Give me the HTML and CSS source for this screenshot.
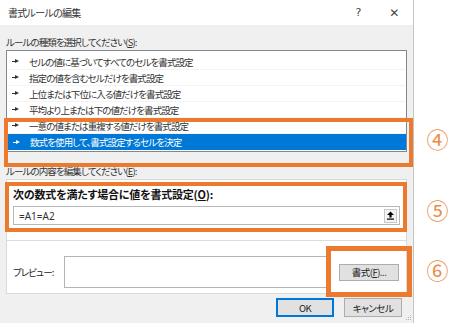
FILE: index.html
```html
<!DOCTYPE html>
<html lang="ja">
<head>
<meta charset="utf-8">
<title>書式ルールの編集</title>
<link rel="stylesheet" href="styles.css">
</head>
<body>
<div class="page">
    <div class="dialog">
        <div class="titlebar">
            <span class="title">書式ルールの編集</span>
            <span class="help">?</span>
            <span class="close">✕</span>
        </div>

        <div class="body">
            <div class="label label_first">ルールの種類を選択してください(<u>S</u>):</div>
            <div class="rule_list">
                <div class="rule_item"><span class="arrow"></span>セルの値に基づいてすべてのセルを書式設定</div>
                <div class="rule_item"><span class="arrow"></span>指定の値を含むセルだけを書式設定</div>
                <div class="rule_item"><span class="arrow"></span>上位または下位に入る値だけを書式設定</div>
                <div class="rule_item"><span class="arrow"></span>平均より上または下の値だけを書式設定</div>
                <div class="rule_item"><span class="arrow"></span>一意の値または重複する値だけを書式設定</div>
                <div class="rule_item selected"><span class="arrow"></span>数式を使用して、書式設定するセルを決定</div>
            </div>

            <div class="label label_second">ルールの内容を編集してください(<u>E</u>):</div>
            <div class="rule_panel">
                <div class="formula_part">
                    <div class="bold_label">次の数式を満たす場合に値を書式設定(<u>O</u>):</div>
                    <div class="formula_input">
                        <span class="formula_text">=A1=A2</span>
                        <span class="collapse_btn">
                            <svg width="9" height="9" viewBox="0 0 9 9">
                                <path d="M4.5 0.5 L8 4 L5.6 4 L5.6 6.5 L3.4 6.5 L3.4 4 L1 4 Z" fill="#000"/>
                                <rect x="1" y="7.5" width="7" height="1.2" fill="#000"/>
                            </svg>
                        </span>
                    </div>
                </div>
                <div class="preview_part">
                    <span class="preview_label">プレビュー:</span>
                    <div class="preview_box"></div>
                    <button class="btn format_btn">書式(<u>F</u>)...</button>
                </div>
            </div>

            <div class="footer">
                <button class="btn ok_btn">OK</button>
                <button class="btn">キャンセル</button>
                <span class="grip">
                    <svg width="6" height="6" viewBox="0 0 6 6">
                        <rect x="4" y="0" width="1" height="1" fill="#b5b5b5"/>
                        <rect x="2" y="2" width="1" height="1" fill="#b5b5b5"/>
                        <rect x="4" y="2" width="1" height="1" fill="#b5b5b5"/>
                        <rect x="0" y="4" width="1" height="1" fill="#b5b5b5"/>
                        <rect x="2" y="4" width="1" height="1" fill="#b5b5b5"/>
                        <rect x="4" y="4" width="1" height="1" fill="#b5b5b5"/>
                    </svg>
                </span>
            </div>
        </div>
    </div>

    <div class="notes">
        <span class="note note_4">④</span>
        <span class="note note_5">⑤</span>
        <span class="note note_6">⑥</span>
    </div>

    <div class="mark mark_4"></div>
    <div class="mark mark_5"></div>
    <div class="mark mark_6"></div>
</div>
</body>
</html>
```

FILE: styles.css
```css
html, body {
    margin: 0;
    padding: 0;
    background-color: white;
}

.page {
    position: relative;
    display: flex;
    width: 461px;
    height: 323px;
    overflow: hidden;
    font-family: "Noto Sans CJK JP", "Noto Sans", sans-serif;
    font-feature-settings: "palt";
    font-size: 9.5px;
    letter-spacing: -0.9px;
    color: #222;
}

.dialog {
    width: 413px;
    height: 323px;
    flex-shrink: 0;
    background-color: #f0f0f0;
    border-right: 1px solid #c4c4c4;
    display: flex;
    flex-direction: column;
}

.titlebar {
    height: 25px;
    background-color: white;
    display: flex;
    align-items: center;
    padding-left: 8px;
    color: #333;
    font-size: 10px;
    letter-spacing: -0.7px;
}

.title {
    flex: 1;
}

.help {
    width: 12px;
    margin-right: 23px;
    text-align: center;
    font-family: "DejaVu Sans", sans-serif;
    font-size: 11px;
    color: #444;
}

.close {
    width: 14px;
    margin-right: 12px;
    text-align: center;
    font-family: "DejaVu Sans", sans-serif;
    font-size: 12px;
    color: #444;
}

.body {
    padding: 0 6px;
}

.label {
    height: 14px;
    line-height: 14px;
    color: #333;
}

.label_first {
    margin-top: 10px;
    margin-bottom: 1px;
}

.rule_list {
    width: 399px;
    background-color: white;
    border: 1px solid #828790;
    padding: 3px 0 1px 0;
}

.rule_item {
    height: 16px;
    line-height: 16px;
    display: flex;
    align-items: center;
    border-bottom: 1px solid #f3f3f3;
    box-sizing: border-box;
    color: #333;
}

.rule_item.selected {
    background-color: #0078d7;
    color: white;
    margin-left: 1px;
    border-bottom: none;
}

.arrow {
    position: relative;
    width: 7px;
    height: 5px;
    margin: 0 10px 0 5px;
}

.arrow::before {
    content: "";
    position: absolute;
    left: 0;
    top: 2px;
    width: 3px;
    height: 1px;
    background-color: currentColor;
}

.arrow::after {
    content: "";
    position: absolute;
    left: 3px;
    top: 0;
    border-left: 4px solid currentColor;
    border-top: 2.5px solid transparent;
    border-bottom: 2.5px solid transparent;
}

.label_second {
    margin-top: 12px;
    margin-bottom: 1px;
}

.rule_panel {
    width: 399px;
    background-color: white;
    border: 1px solid #d9d9d9;
}

.formula_part {
    padding: 6px 6px 15px 6px;
    border-bottom: 1px solid #dcdcdc;
}

.bold_label {
    font-weight: bold;
    font-size: 11px;
    letter-spacing: -0.2px;
    height: 16px;
    line-height: 16px;
    color: #111;
    margin-bottom: 4px;
}

.formula_input {
    height: 17px;
    border: 1px solid #b8b8b8;
    display: flex;
    align-items: center;
    justify-content: space-between;
    padding: 0 2px 0 5px;
}

.formula_text {
    font-family: "Noto Sans", sans-serif;
    font-size: 10px;
    letter-spacing: 0;
    color: #333;
}

.collapse_btn {
    width: 11px;
    height: 12px;
    border: 1px solid #c8c8c8;
    background-color: #f4f4f4;
    display: flex;
    align-items: center;
    justify-content: center;
}

.preview_part {
    height: 42px;
    display: flex;
    align-items: center;
    padding: 10px 0 0 6px;
}

.preview_label {
    width: 51px;
    flex-shrink: 0;
    color: #222;
}

.preview_box {
    width: 261px;
    height: 30px;
    flex-shrink: 0;
    border: 1px solid #b4b4b4;
    margin-right: 12px;
}

.btn {
    font-family: "Noto Sans CJK JP", "Noto Sans", sans-serif;
    font-feature-settings: "palt";
    font-size: 9.5px;
    letter-spacing: -0.5px;
    color: #222;
    background-color: #e1e1e1;
    border: 1px solid #adadad;
    padding: 0;
    height: 19px;
    width: 58px;
    flex-shrink: 0;
}

.format_btn {
    width: 60px;
    height: 17px;
}

.footer {
    display: flex;
    align-items: flex-start;
    gap: 10px;
    margin-top: 4px;
    padding-left: 270px;
}

.ok_btn {
    border: 1px solid #0078d7;
    box-shadow: inset 0 0 0 1px #0078d7;
}

.grip {
    margin: 17px 0 0 -6px;
    line-height: 0;
}

.notes {
    flex: 1;
    display: flex;
    flex-direction: column;
    align-items: center;
    font-family: "Noto Sans CJK JP", sans-serif;
    font-size: 22px;
    letter-spacing: 0;
    line-height: 24px;
    color: #ec8a45;
}

.note_4 {
    margin-top: 126px;
}

.note_5 {
    margin-top: 47px;
}

.note_6 {
    margin-top: 36px;
}

.mark {
    position: absolute;
    z-index: 2;
    border: 4px solid #ec7a2e;
    box-sizing: border-box;
}

.mark_4 {
    left: 4px;
    top: 118px;
    width: 409px;
    height: 49px;
}

.mark_5 {
    left: 5px;
    top: 182px;
    width: 402px;
    height: 50px;
}

.mark_6 {
    left: 326px;
    top: 246px;
    width: 86px;
    height: 51px;
    border-width: 5px;
}
```
